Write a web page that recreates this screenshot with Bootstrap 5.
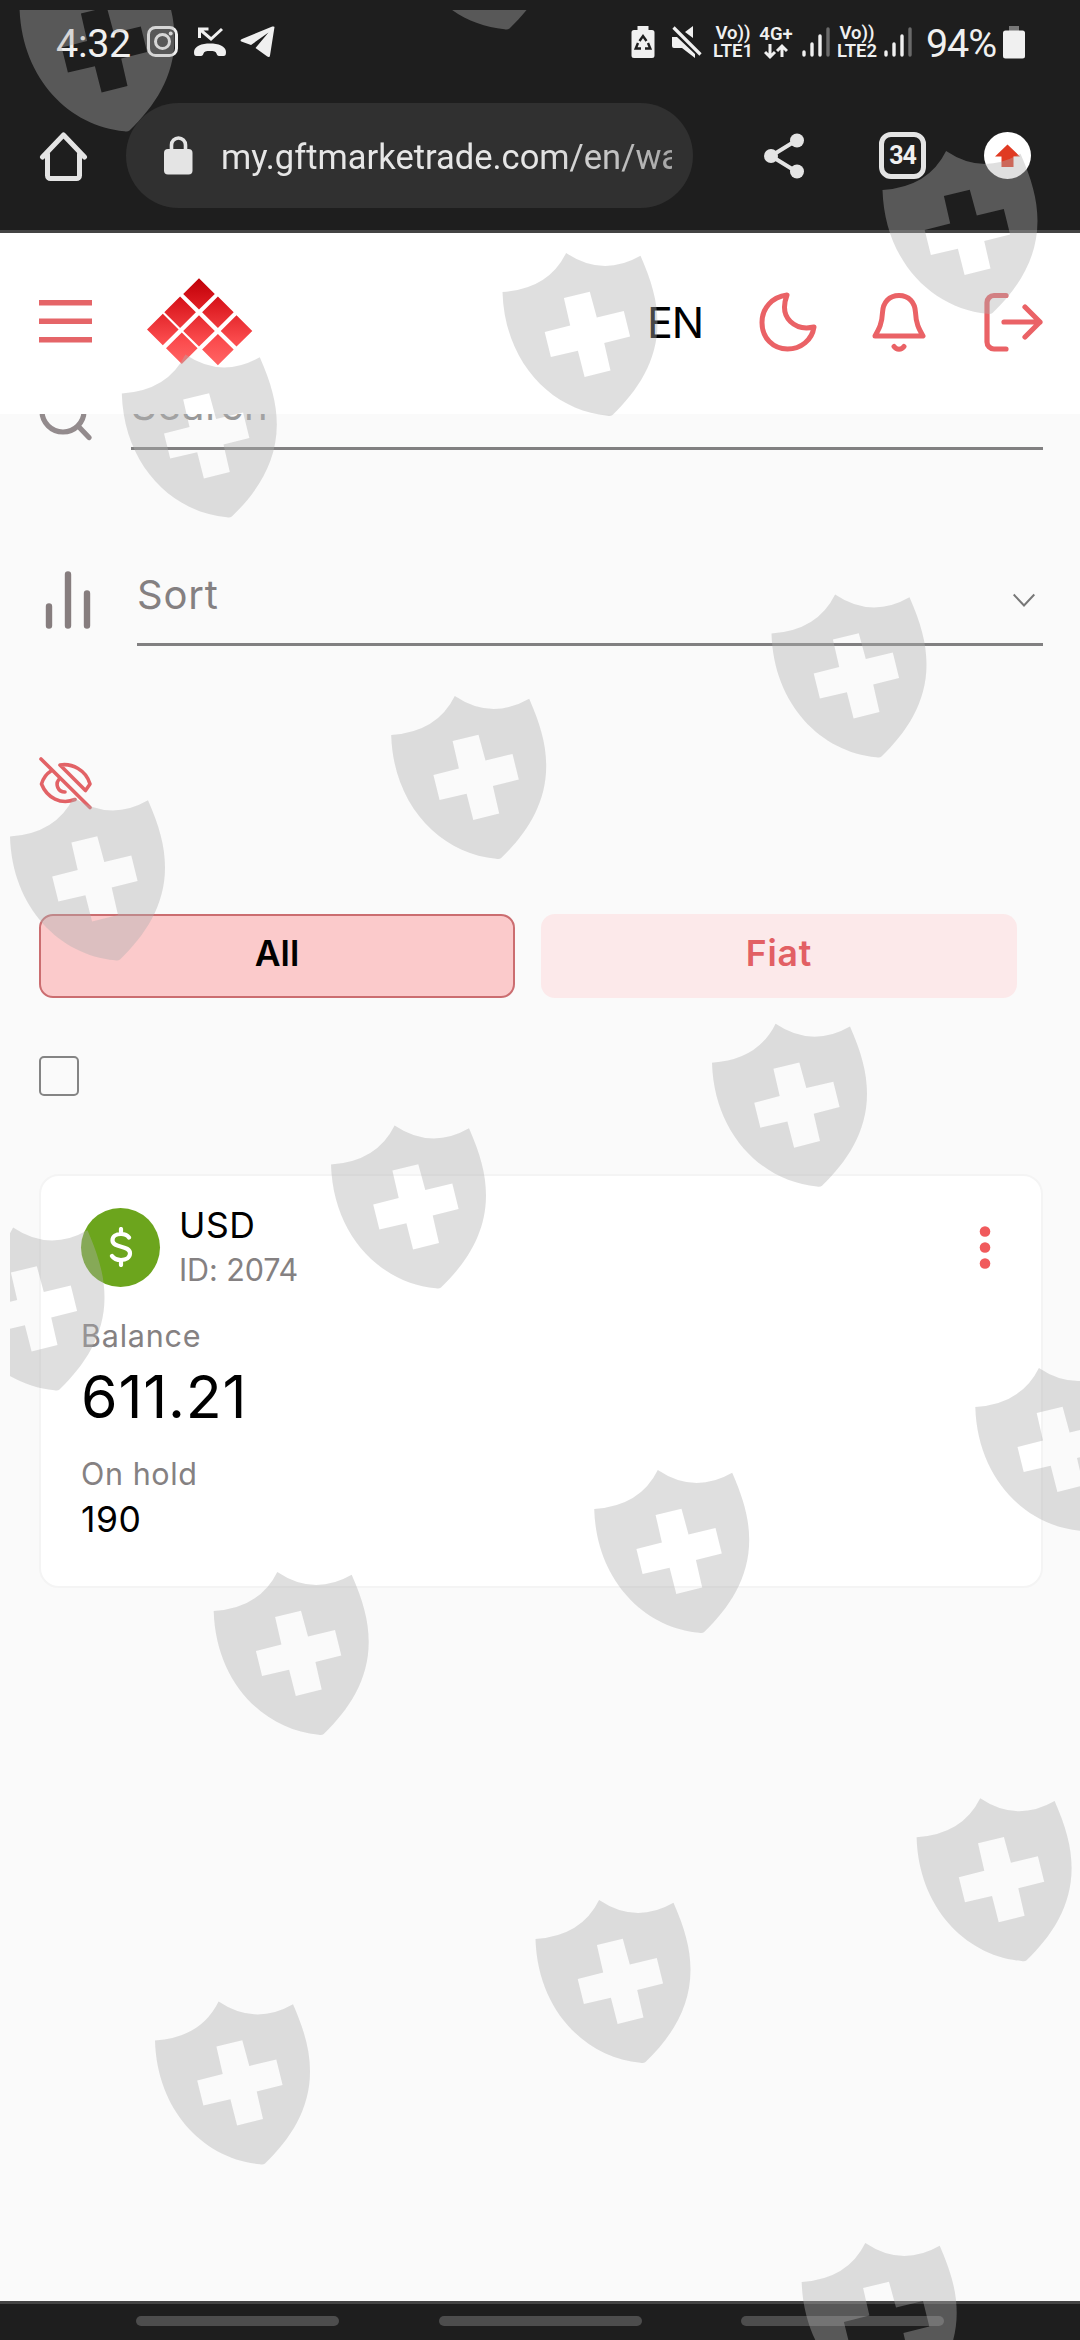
<!DOCTYPE html>
<html lang="en">
<head>
<meta charset="utf-8">
<meta name="viewport" content="width=device-width, initial-scale=1">
<title>Wallets</title>
<link href="https://cdn.jsdelivr.net/npm/bootstrap@5.3.0/dist/css/bootstrap.min.css" rel="stylesheet">
<style>
  body { font-family: Inter, Roboto, sans-serif; background: #fafafa; color: #000; width: 1080px; height: 2340px; overflow: hidden; }
  svg { display: block; flex: none; }
  .screen { height: 2340px; }
  .system-ui { font-family: Roboto, "Liberation Sans", sans-serif; background: #1e1e1e; color: #f0f0f0; height: 233px; border-bottom: 3px solid #444; }
  .status-row { height: 84px; padding-left: 56px; }
  .clock { font-size: 39.5px; line-height: 84px; width: 91px; padding-top: 3px; letter-spacing: -.3px; }
  .percent { font-size: 39.5px; line-height: 84px; width: 76px; padding-top: 3px; letter-spacing: -1.1px; }
  .net { font-size: 18.5px; font-weight: 600; line-height: 18px; text-align: center; white-space: nowrap; }
  .address-row { height: 143px; padding-left: 39px; }
  .omnibox { width: 567px; height: 105px; border-radius: 53px; background: #303030; margin-left: 37px; padding-left: 38px; }
  .url { width: 451px; margin-left: 28px; overflow: hidden; white-space: nowrap; font-size: 34.500px; line-height: 60px; padding-top: 3px; color: #e6e6e6; -webkit-mask-image: linear-gradient(90deg,#000 70%,rgba(0,0,0,.65)); mask-image: linear-gradient(90deg,#000 70%,rgba(0,0,0,.65)); }
  .tab-count { width: 47px; height: 47px; border: 5px solid #e4e4e4; border-radius: 12px; font-size: 25px; line-height: 37px; font-weight: 700; text-align: center; margin-left: 74px; letter-spacing: -1px; }
  .site-header { height: 181px; background: #fff; z-index: 2; padding: 0 36px 4px 39px; }
  .lang { font-size: 43px; line-height: 60px; margin-left: 391px; width: 117px; letter-spacing: -1px; }
  .page { margin-top: -54px; padding: 0 37px 0 39px; z-index: 1; }
  .field { border-bottom: 3px solid #818081; font-size: 40px; color: #848081; letter-spacing: .8px; }
  .field-search { height: 90px; line-height: 92px; margin-left: 39px; color: #999; }
  .field-sort { height: 106px; line-height: 96px; margin-left: 45px; padding: 7px 8px 0 0; }
  .field-sort svg { margin-top: 10px; }
  .tabs-row { margin-top: 104px; gap: 26px; }
  .tab-pill { width: 476px; height: 84px; border-radius: 14px; font-size: 35.5px; font-weight: 600; border: 2px solid transparent; padding: 0 0 4px; line-height: 76px; }
  .tab-pill.on { background: #fbcacb; border-color: #cb6d70; color: #000; }
  .tab-pill.off { background: #fce9ea; color: #e26064; letter-spacing: .8px; }
  .check { width: 40px; height: 40px; margin-top: 58px; border: 2px solid #848484; border-radius: 5px; background: transparent; display: block; }
  .wallet { margin-top: 78px; height: 414px; border: 2px solid #f4f4f4; border-radius: 20px; background: #fff; padding: 28px 40px 0 40px; }
  .coin { width: 79px; height: 79px; background: #6ca51d; margin-right: 19px; margin-top: -2px; }
  .cur { font-size: 35.5px; line-height: 44px; letter-spacing: .5px; }
  .muted-line { font-size: 30.5px; color: #858182; }
  .amount { font-size: 59px; line-height: 72px; margin-top: 5px; letter-spacing: .8px; }
  .nav-strip { height: 39px; margin-top: auto; background: #1e1e1e; border-top: 3px solid #444; padding: 12px 136px 0; }
  .nav-strip span { width: 203px; height: 10px; border-radius: 5px; background: #4d4d4d; }
  .shields { position: absolute; left: 0; top: 0; z-index: 5; pointer-events: none; }
</style>
<script src="https://cdn.jsdelivr.net/npm/bootstrap@5.3.0/dist/js/bootstrap.bundle.min.js"></script>
</head>
<body>
<div class="screen d-flex flex-column position-relative">

  <div class="system-ui flex-shrink-0">
    <div class="status-row d-flex align-items-center">
      <div class="clock">4:32</div>
      <svg width="32" height="32" viewBox="0 0 32 32" fill="none" stroke="#f0f0f0" stroke-width="3"><rect x="1.5" y="1.5" width="28" height="28" rx="7"/><circle cx="15.5" cy="15.5" r="7"/><circle cx="23.7" cy="7.6" r="2" fill="#f0f0f0" stroke="none"/></svg>
      <svg style="margin-left:15px;margin-right:13px" width="33" height="32" viewBox="0 0 33 32"><path d="M5.500 12V3h9M6 3.500l11 9.500L28 3" fill="none" stroke="#f0f0f0" stroke-width="3"/><path d="M0 26c0-6 8-8.500 16-8.500S32 20 32 26c0 3-.8 4-2.500 4h-4.500c-1.500 0-2-1-2.500-2.500-.6-2-2.500-2.500-6.500-2.500s-5.900.5-6.500 2.500C9 29 8.500 30 7 30H2.500C.8 30 0 29 0 26z" fill="#f0f0f0"/></svg>
      <svg width="36" height="32" viewBox="0 0 36 32"><path d="M34.500 1 30 29.500c-.3 1.600-1.400 1.900-2.700 1L15.500 22l13-15.500L11 19l-9-3.200c-2-.8-2-2 0-2.800L32.300.6c1.500-.5 2.400 0 2.200.4z" fill="#f0f0f0"/></svg>

      <svg style="margin-left:355px" width="24" height="33" viewBox="0 0 24 33"><path d="M6.500 0h11v4H21a2.500 2.500 0 0 1 2.500 2.500v23A2.500 2.500 0 0 1 21 32H3a2.500 2.500 0 0 1-2.500-2.500v-23A2.500 2.500 0 0 1 3 4h3.500z" fill="#f0f0f0"/><path d="M8.500 15 12 10l3.500 5M17 17l2.300 5.500H14M10 22.500H4.700L7 17" fill="none" stroke="#1e1e1e" stroke-width="2.400"/></svg>
      <svg style="margin-left:17px" width="30" height="34" viewBox="0 0 30 34"><path d="M0 12h5l18 17v4L10 23H2a2 2 0 0 1-2-2zM21 1v12l-8-6z" fill="#f0f0f0"/><path d="M1.500 2.500l27 27" stroke="#f0f0f0" stroke-width="3.200"/></svg>
      <div class="net" style="width:42px;margin-left:10px"><div>Vo))</div><div>LTE1</div></div>
      <div class="net" style="width:34px;margin-left:5px"><div>4G+</div>
        <svg class="mx-auto" width="24" height="17" viewBox="0 0 24 17" fill="none" stroke="#f0f0f0" stroke-width="3"><path d="M6 1v13M1 9l5 5 5-5M18 14V3M13 8l5-5 5 5"/></svg></div>
      <svg style="margin-left:9px" width="28" height="32" viewBox="0 0 28 32" stroke-width="3.400" stroke-linecap="round" stroke="#f0f0f0"><path d="M2 26v3M10 18v11M18 10v19"/><path d="M26 3v26" stroke="#6a6a6a"/></svg>
      <div class="net" style="width:42px;margin-left:6px"><div>Vo))</div><div>LTE2</div></div>
      <svg style="margin-left:6px" width="28" height="32" viewBox="0 0 28 32" stroke-width="3.400" stroke-linecap="round" stroke="#f0f0f0"><path d="M2 26v3M10 18v11M18 10v19"/><path d="M26 3v26" stroke="#6a6a6a"/></svg>
      <div class="percent" style="margin-left:14px">94%</div>
      <svg style="margin-left:1px" width="22" height="33" viewBox="0 0 22 33"><path d="M6 0h10v5H6z" fill="#777"/><rect y="4.500" width="22" height="28" rx="2.500" fill="#f0f0f0"/></svg>
    </div>
    <div class="address-row d-flex align-items-center">
      <svg width="50" height="50" viewBox="0 0 50 50" fill="none" stroke="#e4e4e4" stroke-width="5" stroke-linecap="round" stroke-linejoin="round"><path d="M3.500 26 24.500 4l21 22M8.500 23v21.500a3 3 0 0 0 3 3h26a3 3 0 0 0 3-3V23"/></svg>
      <div class="omnibox d-flex align-items-center">
        <svg width="29" height="39" viewBox="0 0 29 39"><rect y="13" width="28.500" height="25.500" rx="4" fill="#e4e4e4"/><path d="M7.500 15V9a7 7 0 0 1 14 0v6" fill="none" stroke="#e4e4e4" stroke-width="3.600"/></svg>
        <div class="url">my.gftmarketrade.com/en/wa</div>
      </div>
      <svg style="margin-left:71px" width="41" height="46" viewBox="0 0 41 46"><path d="M33 7 7 23l26 16" fill="none" stroke="#e4e4e4" stroke-width="4"/><g fill="#e4e4e4"><circle cx="33" cy="7.500" r="7"/><circle cx="7" cy="23" r="7"/><circle cx="33" cy="38.500" r="7"/></g></svg>
      <div class="tab-count">34</div>
      <svg style="margin-left:58px" width="47" height="47" viewBox="0 0 47 47"><circle cx="23.500" cy="23.500" r="23.500" fill="#fff"/><path d="M23.500 12.500 36 24.500h-6.500V35h-12V24.500H11z" fill="#e03a22"/></svg>
    </div>
  </div>

  <header class="site-header d-flex align-items-center flex-shrink-0 position-relative">
    <svg width="53" height="43" viewBox="0 0 53 43" fill="#e56568"><path d="M0 0h53v5.500H0zM0 18.500h53v5.500H0zM0 37h53v5.500H0z"/></svg>
    <svg style="margin-left:55px;margin-right:3px" width="106" height="88" viewBox="146.700 277.500 106 88">
      <defs><linearGradient id="red" gradientUnits="userSpaceOnUse" x1="0" y1="278" x2="0" y2="362"><stop offset="0" stop-color="#c00008"/><stop offset=".3" stop-color="#dc1a20"/><stop offset=".75" stop-color="#fb4c4e"/><stop offset="1" stop-color="#ff6262"/></linearGradient></defs>
      <path fill="url(#red)" d="M198.700 277.700l15.800 15.700-15.800 15.700-15.800-15.700zM179.800 296l15.800 15.700-15.800 15.700-15.800-15.700zM217.600 296l15.800 15.700-15.800 15.700-15.800-15.700zM162.500 313.300l15.800 15.700-15.800 15.700-15.800-15.700zM198.700 314.700l15.800 15.700-15.800 15.700-15.800-15.700zM236.200 314.700l15.800 15.700-15.800 15.700-15.800-15.700zM181.500 332l15.800 15.700-15.800 15.700-15.800-15.700zM217.600 333.400l15.800 15.700-15.800 15.700-15.800-15.700z"/></svg>
    <div class="lang">EN</div>
    <svg style="margin-left:-5px" width="60" height="60" viewBox="0 0 60 60" fill="none" stroke="#ea6266" stroke-width="5" stroke-linejoin="round"><path d="M29 3C14 5 4 16 4 30.500 4 46 15 57 29.500 57 43 57 54 48 56 35c-18 4-36-8-27-32z"/></svg>
    <svg style="margin-left:54px" width="54" height="60" viewBox="0 0 54 60" fill="none" stroke="#ea6266" stroke-width="5" stroke-linecap="round" stroke-linejoin="round"><path d="M27 3.500c10 0 16 7 16.500 17C44 32 47 37 51 44H3c4-7 7-12 7.500-23.500C11 10.500 17 3.500 27 3.500zM22 54.500c2.500 3.500 7.500 3.500 10 0"/></svg>
    <svg style="margin-left:58px" width="60" height="60" viewBox="0 0 60 60" fill="none" stroke="#ea6266" stroke-width="5.200" stroke-linecap="round" stroke-linejoin="round"><path d="M22 3.500H10a7 7 0 0 0-7 7V50a7 7 0 0 0 7 7h12M20 30h36M41 15l15 15-15 15"/></svg>
  </header>

  <main class="page position-relative">
    <div class="d-flex">
      <svg width="53" height="90" viewBox="0 0 53 90" fill="none" stroke="#938b8d" stroke-width="5.200" stroke-linecap="round"><circle cx="24" cy="51" r="21"/><path d="M39.500 66.500 50 77.500"/></svg>
      <div class="field field-search flex-grow-1">Search</div>
    </div>
    <div class="d-flex" style="margin-top:90px">
      <svg width="53" height="106" viewBox="0 0 53 106" fill="none" stroke="#867d7e" stroke-width="6.400" stroke-linecap="round"><path d="M10 66.500v19M29 34.500v51M48 53.500v32"/></svg>
      <div class="field field-sort flex-grow-1 d-flex justify-content-between align-items-center"><span>Sort</span>
        <svg width="22" height="15" viewBox="0 0 22 15" fill="none" stroke="#777" stroke-width="2"><path d="M.7 1.500 11 12.500l10.300-11"/></svg></div>
    </div>
    <svg style="margin-top:110px" width="54" height="54" viewBox="0 0 54 54" fill="none" stroke="#e26266" stroke-width="3.600" stroke-linecap="round" stroke-linejoin="round"><path d="M2 3 51 51.500M12 15C7 18 4 23 2.500 28 8 42 22 49 36 43.500M21 9c12-2 26 5 30 19l-4.500 6.500zM19.500 24c-3 4-1 12 6.500 12"/></svg>
    <div class="tabs-row d-flex">
      <button class="btn tab-pill on">All</button>
      <button class="btn tab-pill off">Fiat</button>
    </div>
    <span class="check" role="checkbox" aria-checked="false"></span>
    <section class="wallet">
      <div class="d-flex align-items-center">
        <div class="coin rounded-circle d-flex align-items-center justify-content-center">
          <svg width="24" height="40" viewBox="0 0 24 40" fill="none" stroke="#fff" stroke-width="4.200" stroke-linecap="round"><path d="M12 2v5M12 33v5M20 10.500C18 7.500 15.500 7 12 7c-5 0-8.500 2.500-8.500 6.300 0 8.500 17.500 4.500 17.500 13C21 30.500 17 33 12 33c-4 0-7-1-9-4"/></svg>
        </div>
        <div class="flex-grow-1">
          <div class="cur">USD</div>
          <div class="muted-line" style="line-height:44px;letter-spacing:-.1px">ID: 2074</div>
        </div>
        <svg width="32" height="44" viewBox="0 0 32 44" fill="#f05a5c"><circle cx="16" cy="5.500" r="5.300"/><circle cx="16" cy="21.500" r="5.300"/><circle cx="16" cy="37.500" r="5.300"/></svg>
      </div>
      <div class="muted-line" style="line-height:40px;margin-top:24px;letter-spacing:.8px">Balance</div>
      <div class="amount">611.21</div>
      <div class="muted-line" style="line-height:40px;margin-top:21px;letter-spacing:.6px">On hold</div>
      <div class="cur" style="line-height:46px;margin-top:3px">190</div>
    </section>
  </main>

  <div class="nav-strip d-flex justify-content-between flex-shrink-0"><span></span><span></span><span></span></div>

  <svg class="shields" width="1080" height="2340" viewBox="0 0 1080 2340">
    <defs>
      <clipPath id="edge"><path d="M10 10h1070v2330H10z"/></clipPath>
      <path id="shield" fill-rule="evenodd" d="M0 39Q46 36 63.600 0Q100 24.500 138 2.700C149 28 155 48 155 70C155 108 135 138 110 162Q108 163.500 105 162.700C50 158 2 110 0 39zM61.400 45 67.700 72.400 42.200 79 48.400 104 75.400 97.700 82.100 124 108 117.400 101.700 90 127.600 83.400 121.300 58 94.300 64.400 87.300 38.700z"/>
    </defs>
    <g clip-path="url(#edge)" fill="#b0b0b0" fill-opacity=".4">
      <use href="#shield" x="399.500" y="-133.500"/><use href="#shield" x="19.500" y="-31.500"/>
      <use href="#shield" x="882.500" y="151"/><use href="#shield" x="502.500" y="253"/><use href="#shield" x="121.800" y="354.500"/>
      <use href="#shield" x="771.500" y="594.500"/><use href="#shield" x="391.200" y="696"/><use href="#shield" x="10" y="797.500"/>
      <use href="#shield" x="712" y="1023.700"/><use href="#shield" x="331" y="1125.500"/><use href="#shield" x="-50.500" y="1227.500"/>
      <use href="#shield" x="975.300" y="1368"/><use href="#shield" x="594.200" y="1470"/><use href="#shield" x="213.700" y="1572"/>
      <use href="#shield" x="916.600" y="1798.300"/><use href="#shield" x="535.500" y="1900"/><use href="#shield" x="155" y="2001.500"/>
      <use href="#shield" x="801.700" y="2243"/>
    </g>
  </svg>
</div>
</body>
</html>
